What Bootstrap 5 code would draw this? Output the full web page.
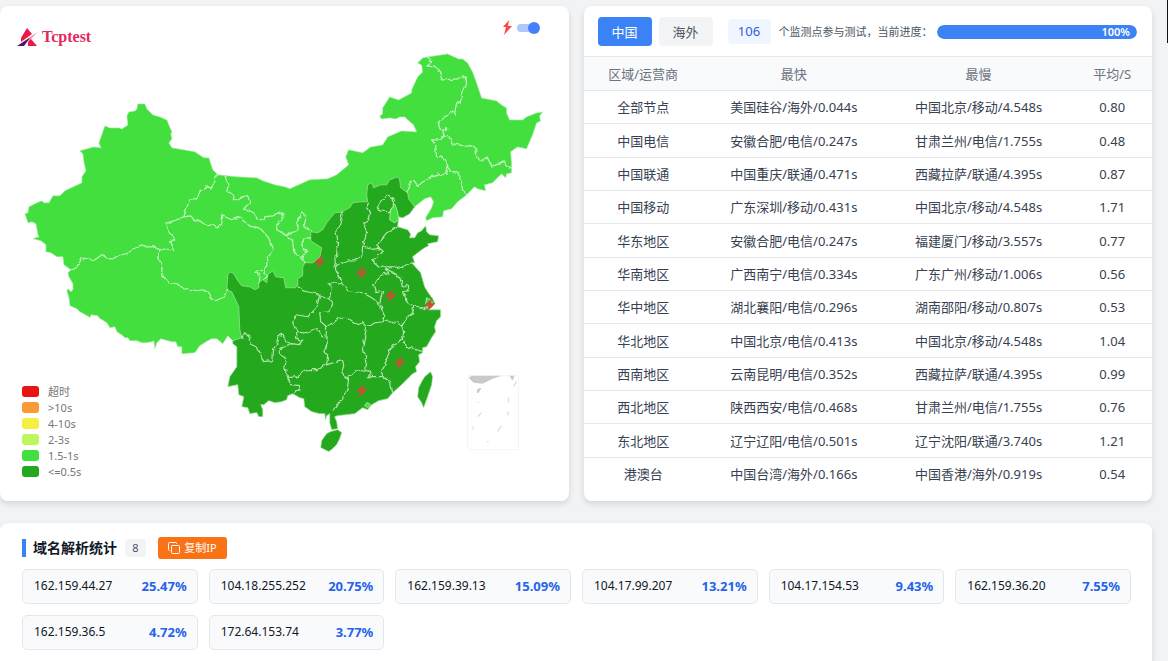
<!DOCTYPE html>
<html lang="zh-CN">
<head>
<meta charset="utf-8">
<meta name="viewport" content="width=device-width, initial-scale=1">
<title>Tcptest</title>
<link href="https://cdn.jsdelivr.net/npm/bootstrap@5.3.0/dist/css/bootstrap.min.css" rel="stylesheet">
<style>
body{background:#f2f3f5;font-family:"Noto Sans","Noto Sans CJK SC",sans-serif;font-size:13px;line-height:20px;color:#374151}
.page-wrap{padding:6px 16px 0 0}
.top-grid{display:grid;grid-template-columns:1fr 1fr;gap:15px;margin-bottom:22px}
.panel{background:#fff;border-radius:8px;box-shadow:0 3px 6px rgba(0,0,0,.12);overflow:hidden;min-width:0}
.brand{top:20px;left:17px;color:#e5285c;font:bold 16px/22px "Liberation Serif",serif;text-decoration:none}
.map-tools{top:14px;right:29px}
.flash-toggle{appearance:none;width:23px;height:12px;margin:0;position:relative;cursor:pointer}
.flash-toggle::before{content:"";position:absolute;left:0;right:2px;top:2px;height:8px;border-radius:4px;background:#adc7ff}
.flash-toggle::after{content:"";position:absolute;left:0;top:0;width:12px;height:12px;border-radius:50%;background:#467ffb}
.flash-toggle:checked::after{left:auto;right:0}
.legend-list{left:22px;bottom:21px;font-size:11px;line-height:16px;color:#777}
.legend-list li{gap:9px}
.swatch{width:17px;height:11px;border-radius:3px}
.probe-bar{padding:11px 15px 10px 14px;height:50px}
.tab-btn{width:54px;height:29px;padding:0;border-radius:4px;font-size:13px;line-height:20px;border:0;background:#f3f4f6;color:#4b5563}
.tab-btn.active{background:#3b82f6;color:#fff}
.tab-group{gap:7px;margin-right:15px}
.probe-count{width:43px;height:25px;border-radius:4px;background:#eff6ff;color:#2f5be8;line-height:25px;margin-right:8px}
.probe-text{font-size:11px;color:#4b5563;margin-right:4px}
.probe-progress{flex:1 1 0;height:14px;border-radius:7px;background:#e5e7eb}
.probe-progress .progress-bar{background:#3b82f6;font-size:11px;font-weight:600;text-align:right;padding-right:7px;border-radius:7px}
.speed-table{height:434px;table-layout:fixed;--bs-table-bg:#fff;margin:0;text-align:center;vertical-align:middle;border-top:1px solid #e5e7eb}
.speed-table th,.speed-table td{padding:0;color:#374151;border-color:#e5e7eb;font-weight:400;white-space:nowrap}
.speed-table th{height:34px;vertical-align:middle;background:#f9fafb;color:#6b7280}
.speed-table tbody tr:last-child td{border-bottom:0}
.dns-panel{border-radius:8px 8px 0 0;padding:14px 21px 14px 22px}
.dns-head{margin-bottom:10px}
.dns-title{font-size:14px;font-weight:700;line-height:18px;color:#111827;border-left:4px solid #3b82f6;padding-left:7px}
.dns-count{width:21px;height:18px;line-height:18px;font-size:11px;border-radius:3px;background:#f3f4f6;color:#4b5563}
.copy-btn{width:69px;height:22px;padding:0;border:0;border-radius:3px;background:#f97316;color:#fff;font-size:11px;line-height:22px}
.dns-row{--bs-gutter-x:11px;--bs-gutter-y:11px}
.dns-item{height:35px;border:1px solid #e5e7eb;border-radius:5px;background:#f9fafb;padding:0 10px 0 11px}
.dns-ip{font-size:12px;color:#111827}
.dns-share{font-size:13px;font-weight:700;color:#2563eb}
.scroll-thumb{top:0;right:0;width:1px;height:43px;background:#0b1020}
</style>
</head>
<body>
<div class="scroll-thumb position-fixed"></div>
<main class="page-wrap">
<div class="top-grid">
<section class="panel position-relative">
<svg class="d-block w-100" viewBox="0 6 569 495" role="img" aria-label="中国">
<defs><path id="bolt" d="M3-7-6 1H-1L-3 7 6-1.500H1Z"/>
<filter id="meander" x="-5%" y="-5%" width="110%" height="110%"><feTurbulence type="fractalNoise" baseFrequency=".16" numOctaves="2" seed="4"/><feDisplacementMap in="SourceGraphic" scale="5" xChannelSelector="R" yChannelSelector="G"/></filter></defs>
<g stroke-linejoin="round">
<path fill="#43df3f" stroke="#a8efa6" stroke-width=".6" d="M218 175 213 170 209 158 204 158 195 152 172 148 169 143 172 139 171 134 172 132 169 125 167 120 160 117 153 115 147 109 145 104 138 104 137 109 135 111 129 112 127 116 128 125 122 129 119 128 110 128 105 126 99 143 101 148 94 147 80 151 83 154 84 162 86 171 82 177 82 183 65 191 60 196 53 196 49 203 44 203 42 201 37 203 29 207 28 213 25 214 28 223 32 222 36 224 38 235 39 237 33 239 41 241 46 245 46 252 51 253 57 257 63 257 64 265 71 270 68 273 69 277 73 284 73 290 71 292 68 289 67 291 69 298 70 306 77 309 80 312 89 317 90 318 91 315 98 316 99 318 107 323 110 328 115 327 117 332 123 336 125 338 128 338 130 341 137 341 142 343 146 343 152 342 154 341 155 349 157 343 161 339 168 341 172 342 176 342 178 347 182 347 182 354 195 353 200 346 208 341 212 339 217 339 223 344 228 336 233 341 330 330 398 222 399 217 403 218 410 214 415 207 425 199 431 197 434 202 432 208 426 218 427 221 433 218 443 217 444 211 452 209 458 202 466 196 475 187 478 189 486 191 485 185 493 183 502 174 506 178 507 174 512 173 512 163 511 152 518 147 527 149 533 135 537 123 541 121 540 116 543 112 537 113 527 117 523 120 510 120 507 113 507 108 502 105 497 101 482 98 477 83 473 72 468 63 463 59 459 59 448 54 428 57 423 58 418 63 422 65 423 72 418 77 412 90 412 93 399 100 390 97 383 108 383 114 380 116 382 119 390 118 396 119 400 117 405 117 414 125 417 132 402 131 388 137 383 145 371 147 363 153 349 150 346 157 349 165 337 175 328 179 310 180 290 189 285 187 275 185 263 181 257 178 237 177Z"/>
<path fill="#24a91e" stroke="#a9dfa5" stroke-width=".7" d="M233 341 242 338 240 330 239 307 232 292 227 290 228 275 230 272 234 274 238 281 242 286 250 287 255 290 259 288 259 283 263 280 267 283 268 275 273 271 276 277 284 278 286 288 295 288 298 286 298 279 303 276 303 268 305 263 313 263 320 258 322 248 311 241 311 232 318 233 323 230 327 223 335 213 342 212 350 208 353 203 361 202 368 202 367 195 368 185 372 183 374 188 381 185 387 185 390 180 398 177 400 180 401 188 408 193 409 199 415 207 410 214 403 218 399 217 398 227 408 230 411 234 410 238 415 238 418 233 422 231 426 226 427 232 430 235 439 236 438 242 428 244 429 246 425 248 418 253 413 257 415 263 412 263 421 273 425 287 428 292 433 299 435 303 433 307 428 310 441 310 441 317 437 321 435 327 436 332 432 338 427 347 423 348 423 353 419 355 420 362 416 367 417 372 413 374 402 385 393 393 388 399 379 401 372 405 368 410 363 408 355 414 338 416 335 417 337 422 338 429 332 430 330 423 330 414 327 416 326 420 325 414 320 414 312 412 305 407 304 399 300 398 293 394 288 396 287 400 282 402 275 403 269 401 264 405 261 405 263 410 263 417 259 417 257 413 250 414 248 408 242 407 244 397 239 395 238 385 228 387 230 377 237 367 237 347 233 344Z"/>
<path fill="#24a91e" stroke="#a9dfa5" stroke-width=".6" d="M331 432 338 430 342 433 340 439 337 445 333 449 329 452 321 448 322 441 327 434ZM431 372 433 377 432 385 428 397 424 408 422 403 418 397 419 388 422 382 425 377Z"/>
<path fill="#43df3f" stroke="#b8ecb5" stroke-width=".8" d="M393 207 395 204 398 212 399 220 395 223 390 220 391 210ZM427 298 431 300 434 304 432 308 428 309 426 304ZM365 406 367 403 370 404 371 406 368 408Z"/>
</g>
<g fill="none" stroke="#c4f3c1" stroke-width="1.200" stroke-linejoin="round" filter="url(#meander)">
<path d="M71 270 77 268 82 258 95 260 102 255 107 258 115 258 122 255 130 253 133 249 143 246 153 246 160 251 159 258 162 267 162 275 169 283 177 284 183 288 197 291 204 290 209 294 211 299 216 301 222 298 226 295 228 290"/>
<path d="M160 251 166 249 173 251 173 246 170 243 175 239 169 232 168 226 166 224 184 217 190 199 196 199 200 192 207 187 211 188 215 183 215 178 218 175"/>
<path d="M184 217 191 216 195 221 202 221 206 226 212 225 217 228 222 223 223 216 232 220 240 217 248 225 260 228 268 237 273 249 267 260 267 266 264 272 256 271 260 277 259 283M264 272 267 276 263 280"/>
<path d="M225 176 229 186 228 191 234 196 235 201 242 197 248 196 250 202 244 209 253 213 257 218 264 221 265 217 273 216 282 213 284 217 277 225 277 230 286 235 297 231 298 220 303 213 307 217 304 227 312 231M286 235 293 242 294 252 303 260 304 255 307 252 303 246 304 239 311 239M303 260 305 263"/>
<path d="M408 193 411 182 414 181 418 187 422 183 432 177 440 175 447 174 448 168 455 173 458 173 462 183 463 190 466 196M448 168 443 157 437 158 436 145 432 140 440 140 444 136 443 130 447 131 447 128 443 130 438 123 453 111 455 114 457 103 461 103 462 93 467 82 463 76 459 79 443 80 439 69 434 67 427 66 432 61 429 57M444 136 450 137 453 144 465 146 476 148 477 155 483 161 488 157 493 167 500 163 505 162 507 166 512 168"/>
</g>
<g fill="none" stroke="#b4e3af" stroke-width="1.200" stroke-linejoin="round" filter="url(#meander)">
<path d="M343 212 340 225 336 230 338 240 337 253 335 267 352 260 357 260 362 257 363 247 367 232 363 223 368 220 371 212 367 207 369 203M363 247 370 249 380 250 378 247 381 240 387 233 398 227M378 247 383 251 373 261 380 267 388 267 395 267 402 269 406 266 412 263"/>
<path d="M335 267 342 282 348 291 363 293 372 298 379 303 384 313 384 322M386 268 389 274 380 276 377 283 374 285 377 293 383 291 380 303M386 268 395 274 400 277 403 287 409 287 409 291 404 292 407 303 414 306 423 308 428 310M414 306 413 313 407 319 402 325 393 323 390 320 384 322 376 323 367 327"/>
<path d="M367 327 363 323 358 325 348 319 338 318 333 323 327 327 321 322 320 313 329 312 334 305 329 299 333 288 328 283 342 283M298 287 307 292 318 294 329 299M320 294 317 308 312 313 308 317 297 315 293 323 297 332 303 334 313 330 317 329 323 338 326 339 327 327"/>
<path d="M327 338 328 347 323 352 328 355 327 365M297 332 297 338 302 342 299 345 292 344 282 347 279 353 283 357 287 358 285 367 288 378M242 338 245 333 250 338 251 343 257 346 264 362 273 361 274 348 277 344 278 338 283 334 287 342 292 344"/>
<path d="M288 378 298 377 308 370 318 370 327 365 343 361 344 366 342 373 349 378 348 387 344 398 338 405 332 412M288 378 291 385 300 386 300 390 295 394M349 378 357 370 366 372 372 373 368 377 382 377M367 327 365 338 363 348 367 360 366 372M382 377 384 367 390 353 393 345 403 340 404 332 402 325M403 340 407 348 412 347 416 350 423 352M382 377 390 380 393 393"/>
<path d="M387 195 392 199 395 201 394 207 390 212 380 211 378 206 382 200Z"/>
</g>
<g fill="#c84f32">
<use href="#bolt" x="320" y="262"/><use href="#bolt" x="362" y="273"/><use href="#bolt" x="391" y="296"/><use href="#bolt" x="430" y="305"/><use href="#bolt" x="400" y="363"/><use href="#bolt" x="362" y="391"/>
</g>
<rect x="468" y="376" width="51" height="74" rx="1" fill="none" stroke="#f5f5f5"/>
<path fill="#c9c9c9" d="M469 378 472 376H502L493 379 483 384 474 383ZM478 389 482 388 479 393 477 393ZM510 376H515L513 381Z"/>
<path fill="none" stroke="#dedede" stroke-width="1.300" d="M478 402 479 403M482 413 478 417M473 427 474 430M509 398V403M509 412 508 416M502 426 498 432M489 442 487 442M517 382 514 387"/>
</svg>
<a href="#" class="brand position-absolute d-flex align-items-center">
<svg class="me-1" width="21" height="19" viewBox="0 0 21 19" aria-hidden="true"><path fill="#ed1848" d="M10 0 15 6 4 14V10ZM17 7 14 11 20 18H11V14Z"/><path fill="#f27ca4" d="M21 4 7 13 2 17 11 13Z"/><path fill="#4b176b" d="M0 18 11 11 13 10 7 18Z"/></svg>Tcptest</a>
<label class="map-tools position-absolute d-flex align-items-center gap-1">
<svg width="11" height="15" viewBox="0 0 11 15" aria-hidden="true"><path fill="#f44" d="M7 0 1 7H4L2 15 10 6H6Z"/></svg>
<input type="checkbox" class="flash-toggle" role="switch" aria-label="闪电" checked></label>
<ul class="legend-list position-absolute list-unstyled m-0">
<li class="d-flex align-items-center"><span class="swatch" style="background:#e81313"></span>超时</li>
<li class="d-flex align-items-center"><span class="swatch" style="background:#f89a35"></span>&gt;10s</li>
<li class="d-flex align-items-center"><span class="swatch" style="background:#f7ee42"></span>4-10s</li>
<li class="d-flex align-items-center"><span class="swatch" style="background:#bdf760"></span>2-3s</li>
<li class="d-flex align-items-center"><span class="swatch" style="background:#43df3f"></span>1.5-1s</li>
<li class="d-flex align-items-center"><span class="swatch" style="background:#24a91e"></span>&lt;=0.5s</li>
</ul>
</section>
<section class="panel">
<div class="probe-bar d-flex align-items-center">
<div class="tab-group d-flex">
<button type="button" class="btn tab-btn active">中国</button>
<button type="button" class="btn tab-btn">海外</button>
</div>
<span class="probe-count text-center">106</span>
<span class="probe-text text-nowrap">个监测点参与测试，当前进度：</span>
<div class="progress probe-progress" role="progressbar" aria-label="当前进度" aria-valuenow="100" aria-valuemin="0" aria-valuemax="100"><div class="progress-bar" style="width:100%">100%</div></div>
</div>
<table class="table speed-table">
<colgroup><col style="width:21%"><col style="width:32%"><col style="width:33%"><col style="width:14%"></colgroup>
<thead><tr><th scope="col">区域/运营商</th><th scope="col">最快</th><th scope="col">最慢</th><th scope="col">平均/S</th></tr></thead>
<tbody>
<tr><td>全部节点</td><td>美国硅谷/海外/0.044s</td><td>中国北京/移动/4.548s</td><td>0.80</td></tr>
<tr><td>中国电信</td><td>安徽合肥/电信/0.247s</td><td>甘肃兰州/电信/1.755s</td><td>0.48</td></tr>
<tr><td>中国联通</td><td>中国重庆/联通/0.471s</td><td>西藏拉萨/联通/4.395s</td><td>0.87</td></tr>
<tr><td>中国移动</td><td>广东深圳/移动/0.431s</td><td>中国北京/移动/4.548s</td><td>1.71</td></tr>
<tr><td>华东地区</td><td>安徽合肥/电信/0.247s</td><td>福建厦门/移动/3.557s</td><td>0.77</td></tr>
<tr><td>华南地区</td><td>广西南宁/电信/0.334s</td><td>广东广州/移动/1.006s</td><td>0.56</td></tr>
<tr><td>华中地区</td><td>湖北襄阳/电信/0.296s</td><td>湖南邵阳/移动/0.807s</td><td>0.53</td></tr>
<tr><td>华北地区</td><td>中国北京/电信/0.413s</td><td>中国北京/移动/4.548s</td><td>1.04</td></tr>
<tr><td>西南地区</td><td>云南昆明/电信/0.352s</td><td>西藏拉萨/联通/4.395s</td><td>0.99</td></tr>
<tr><td>西北地区</td><td>陕西西安/电信/0.468s</td><td>甘肃兰州/电信/1.755s</td><td>0.76</td></tr>
<tr><td>东北地区</td><td>辽宁辽阳/电信/0.501s</td><td>辽宁沈阳/联通/3.740s</td><td>1.21</td></tr>
<tr><td>港澳台</td><td>中国台湾/海外/0.166s</td><td>中国香港/海外/0.919s</td><td>0.54</td></tr>
</tbody>
</table>
</section>
</div>
<section class="panel dns-panel">
<div class="dns-head d-flex align-items-center gap-2">
<h2 class="dns-title m-0">域名解析统计</h2>
<span class="dns-count text-center">8</span>
<button type="button" class="btn copy-btn d-flex align-items-center justify-content-center gap-1 ms-1"><svg width="12" height="12" viewBox="0 0 12 12" fill="none" stroke="#fff" aria-hidden="true"><rect x="3.500" y="3.500" width="8" height="8" rx="1"/><path d="M2 8.500H1.500A1 1 0 0 1 .5 7.500V1.500A1 1 0 0 1 1.500 .5H7.500A1 1 0 0 1 8.500 1.500V2"/></svg>复制IP</button>
</div>
<div class="row row-cols-6 dns-row">
<div class="col"><div class="dns-item d-flex align-items-center justify-content-between"><span class="dns-ip">162.159.44.27</span><span class="dns-share">25.47%</span></div></div>
<div class="col"><div class="dns-item d-flex align-items-center justify-content-between"><span class="dns-ip">104.18.255.252</span><span class="dns-share">20.75%</span></div></div>
<div class="col"><div class="dns-item d-flex align-items-center justify-content-between"><span class="dns-ip">162.159.39.13</span><span class="dns-share">15.09%</span></div></div>
<div class="col"><div class="dns-item d-flex align-items-center justify-content-between"><span class="dns-ip">104.17.99.207</span><span class="dns-share">13.21%</span></div></div>
<div class="col"><div class="dns-item d-flex align-items-center justify-content-between"><span class="dns-ip">104.17.154.53</span><span class="dns-share">9.43%</span></div></div>
<div class="col"><div class="dns-item d-flex align-items-center justify-content-between"><span class="dns-ip">162.159.36.20</span><span class="dns-share">7.55%</span></div></div>
<div class="col"><div class="dns-item d-flex align-items-center justify-content-between"><span class="dns-ip">162.159.36.5</span><span class="dns-share">4.72%</span></div></div>
<div class="col"><div class="dns-item d-flex align-items-center justify-content-between"><span class="dns-ip">172.64.153.74</span><span class="dns-share">3.77%</span></div></div>
</div>
</section>
</main>
<script src="https://cdn.jsdelivr.net/npm/bootstrap@5.3.0/dist/js/bootstrap.bundle.min.js"></script>
</body>
</html>
